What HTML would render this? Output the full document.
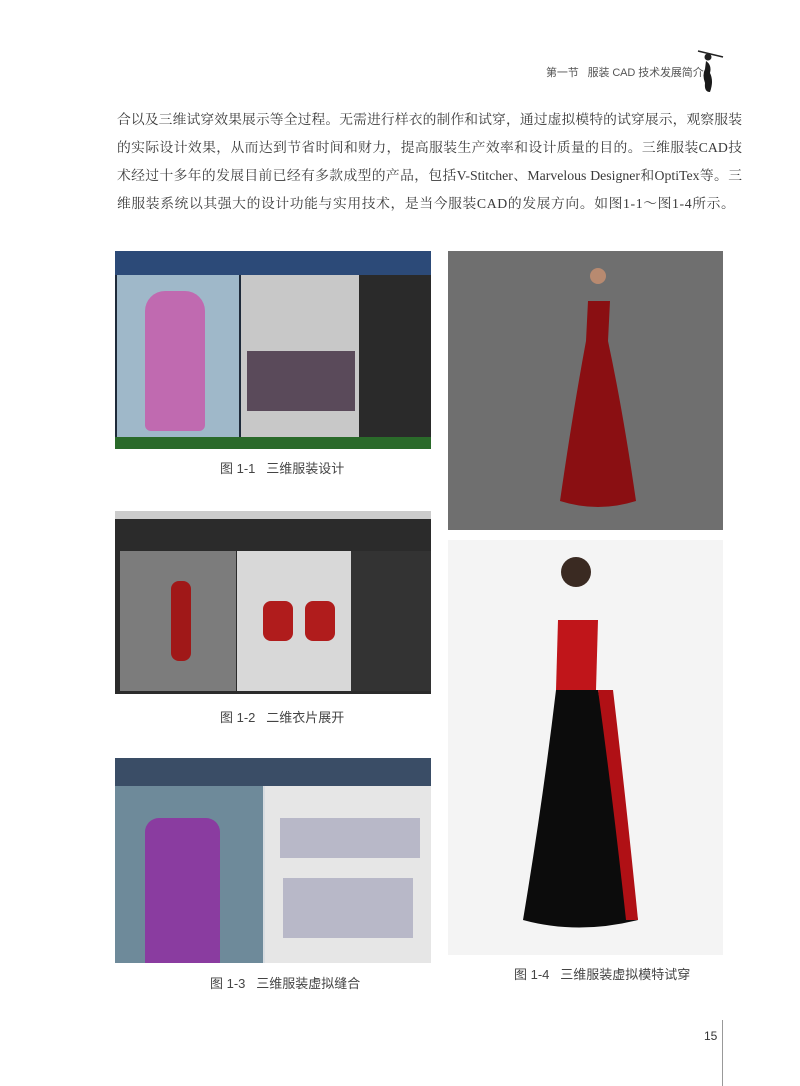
<!DOCTYPE html>
<html><head><meta charset="utf-8"><style>
*{margin:0;padding:0;box-sizing:border-box}
body{width:800px;height:1086px;background:#fff;position:relative;overflow:hidden;font-family:"Liberation Serif","Noto Serif CJK SC","Noto Sans CJK SC",serif;color:#333}
.a{position:absolute}
.hdr{left:546px;top:64px;font:11px "Liberation Sans","Noto Sans CJK SC",sans-serif;color:#555;white-space:nowrap;letter-spacing:-0.1px}
.txt{left:117px;top:106px;width:625px;font-size:13.8px;line-height:28px;color:#3a3a3a}
.txt div{text-align:justify;text-align-last:justify;white-space:nowrap}
.txt div.l{text-align-last:left;letter-spacing:0.6px}
.cap{font:13px "Liberation Sans","Noto Sans CJK SC",sans-serif;color:#444;white-space:nowrap}
</style></head><body>
<div class="a hdr">第一节&nbsp;&nbsp;&nbsp;服装 CAD 技术发展简介</div>
<svg class="a" style="left:697px;top:47px" width="28" height="48"><line x1="1" y1="4" x2="26" y2="10" stroke="#222" stroke-width="1.5"/><circle cx="11" cy="10" r="3.5" fill="#222"/><path d="M9 14 Q15 18 13 26 Q17 34 13 45 Q7 45 8 36 Q5 28 8 22 Z" fill="#1a1a1a"/></svg>
<div class="a txt">
<div>合以及三维试穿效果展示等全过程。无需进行样衣的制作和试穿，通过虚拟模特的试穿展示，观察服装</div>
<div>的实际设计效果，从而达到节省时间和财力，提高服装生产效率和设计质量的目的。三维服装CAD技</div>
<div>术经过十多年的发展目前已经有多款成型的产品，包括V-Stitcher、Marvelous Designer和OptiTex等。三</div>
<div class="l">维服装系统以其强大的设计功能与实用技术，是当今服装CAD的发展方向。如图1-1～图1-4所示。</div>
</div>

<!-- Fig 1-1 -->
<div class="a" style="left:115px;top:251px;width:316px;height:198px;background:#1e2a3a">
 <div class="a" style="left:0;top:0;width:316px;height:24px;background:#2c4a78"></div>
 <div class="a" style="left:2px;top:24px;width:122px;height:162px;background:#9fb8c9"></div>
 <div class="a" style="left:30px;top:40px;width:60px;height:140px;background:#c06ab0;border-radius:20px 20px 6px 6px"></div>
 <div class="a" style="left:126px;top:24px;width:118px;height:162px;background:#c8c8c8"></div>
 <div class="a" style="left:132px;top:100px;width:108px;height:60px;background:#5a4a5a"></div>
 <div class="a" style="left:244px;top:24px;width:72px;height:162px;background:#2a2a2a"></div>
 <div class="a" style="left:0;top:186px;width:316px;height:12px;background:#2a6a2a"></div>
</div>
<div class="a cap" style="left:220px;top:458px">图 1-1&nbsp;&nbsp;&nbsp;三维服装设计</div>

<!-- Fig 1-2 -->
<div class="a" style="left:115px;top:511px;width:316px;height:183px;background:#2b2b2b">
 <div class="a" style="left:0;top:0;width:316px;height:8px;background:#ccc"></div>
 <div class="a" style="left:5px;top:40px;width:116px;height:140px;background:#7c7c7c"></div>
 <div class="a" style="left:56px;top:70px;width:20px;height:80px;background:#a01818;border-radius:8px"></div>
 <div class="a" style="left:122px;top:40px;width:114px;height:140px;background:#d8d8d8"></div>
 <div class="a" style="left:148px;top:90px;width:30px;height:40px;background:#b01c1c;border-radius:8px"></div>
 <div class="a" style="left:190px;top:90px;width:30px;height:40px;background:#b01c1c;border-radius:8px"></div>
 <div class="a" style="left:236px;top:40px;width:80px;height:140px;background:#333"></div>
</div>
<div class="a cap" style="left:220px;top:707px">图 1-2&nbsp;&nbsp;&nbsp;二维衣片展开</div>

<!-- Fig 1-3 -->
<div class="a" style="left:115px;top:758px;width:316px;height:205px;background:#d8dce0">
 <div class="a" style="left:0;top:0;width:316px;height:28px;background:#3a4d66"></div>
 <div class="a" style="left:0;top:28px;width:148px;height:177px;background:#6e8a9a"></div>
 <div class="a" style="left:30px;top:60px;width:75px;height:145px;background:#8a3ca0;border-radius:14px 14px 0 0"></div>
 <div class="a" style="left:150px;top:28px;width:166px;height:177px;background:#e6e6e6"></div>
 <div class="a" style="left:165px;top:60px;width:140px;height:40px;background:#b8b8c8"></div>
 <div class="a" style="left:168px;top:120px;width:130px;height:60px;background:#b8b8c8"></div>
</div>
<div class="a cap" style="left:210px;top:973px">图 1-3&nbsp;&nbsp;&nbsp;三维服装虚拟缝合</div>

<!-- Right top -->
<div class="a" style="left:448px;top:251px;width:275px;height:279px;background:#6f6f6f">
 <svg width="275" height="279"><circle cx="150" cy="25" r="8" fill="#b88a70"/><path d="M140 50 L162 50 L160 90 Q175 160 188 250 Q150 262 112 250 Q125 160 138 90 Z" fill="#8a0f12"/></svg>
</div>
<!-- Right bottom -->
<div class="a" style="left:448px;top:540px;width:275px;height:415px;background:#f4f4f4">
 <svg width="275" height="415"><circle cx="128" cy="32" r="15" fill="#3a2a22"/><path d="M110 80 L150 80 L148 150 L108 150 Z" fill="#c0151a"/><path d="M108 150 L150 150 Q170 260 190 380 Q130 395 75 380 Q95 260 108 150 Z" fill="#0c0c0c"/><path d="M150 150 L165 150 Q178 260 190 380 L178 380 Q165 260 150 150Z" fill="#b01015"/></svg>
</div>
<div class="a cap" style="left:514px;top:964px">图 1-4&nbsp;&nbsp;&nbsp;三维服装虚拟模特试穿</div>

<div class="a" style="left:704px;top:1029px;font:12px 'Liberation Sans',sans-serif;color:#333">15</div>
<div class="a" style="left:722px;top:1020px;width:1px;height:66px;background:#999"></div>
</body></html>
